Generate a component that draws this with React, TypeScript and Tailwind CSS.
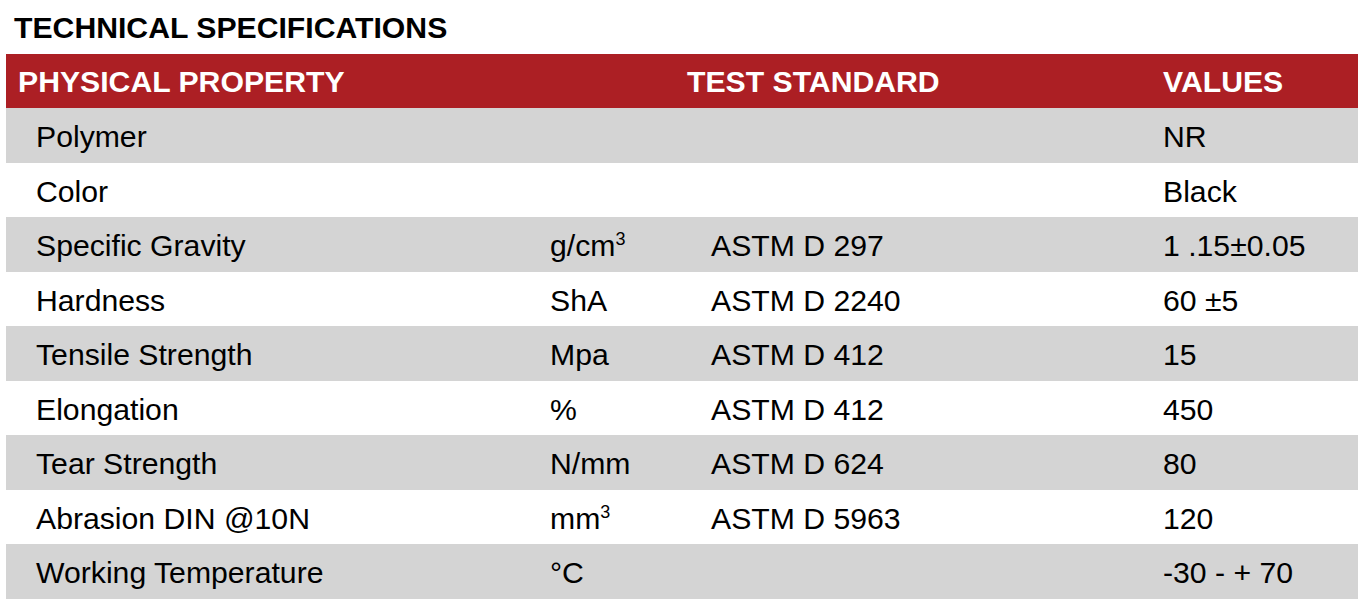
const rows: { name: string; unit: React.ReactNode; standard: string; value: string }[] = [
  { name: 'Polymer', unit: '', standard: '', value: 'NR' },
  { name: 'Color', unit: '', standard: '', value: 'Black' },
  {
    name: 'Specific Gravity',
    unit: (
      <>
        g/cm<sup className="relative -top-[11px] align-baseline text-[18px]">3</sup>
      </>
    ),
    standard: 'ASTM D 297',
    value: '1 .15±0.05',
  },
  { name: 'Hardness', unit: 'ShA', standard: 'ASTM D 2240', value: '60 ±5' },
  { name: 'Tensile Strength', unit: 'Mpa', standard: 'ASTM D 412', value: '15' },
  { name: 'Elongation', unit: '%', standard: 'ASTM D 412', value: '450' },
  { name: 'Tear Strength', unit: 'N/mm', standard: 'ASTM D 624', value: '80' },
  {
    name: 'Abrasion DIN @10N',
    unit: (
      <>
        mm<sup className="relative -top-[11px] align-baseline text-[18px]">3</sup>
      </>
    ),
    standard: 'ASTM D 5963',
    value: '120',
  },
  { name: 'Working Temperature', unit: '°C', standard: '', value: '-30 - + 70' },
];

export default function App() {
  return (
    <div className="min-h-screen bg-white font-['Liberation_Sans',Arial,sans-serif] text-[30.2px] text-black">
      <div className="flex h-[54px] items-center pl-[14px] pt-[2px] font-bold">TECHNICAL SPECIFICATIONS</div>

      <div className="mx-[6px] w-[1352px]">
        {/* header */}
        <div className="grid h-[54px] grid-cols-[681px_476px_1fr] items-center bg-[#ac1f24] pt-[2px] font-bold text-white">
          <div className="pl-[12px]">PHYSICAL PROPERTY</div>
          <div>TEST STANDARD</div>
          <div>VALUES</div>
        </div>

        {rows.map((r, i) => (
          <div
            key={r.name}
            className={`grid h-[54.5px] grid-cols-[544px_161px_452px_1fr] items-center pt-[3px] ${
              i % 2 === 0 ? 'bg-[#d4d4d4]' : 'bg-white'
            }`}
          >
            <div className="pl-[30px]">{r.name}</div>
            <div>{r.unit}</div>
            <div>{r.standard}</div>
            <div>{r.value}</div>
          </div>
        ))}
      </div>
    </div>
  );
}
